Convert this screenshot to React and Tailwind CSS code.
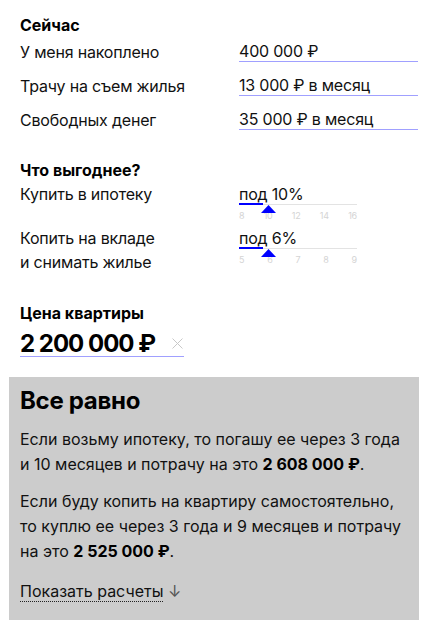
const font = { fontFamily: 'Inter, "Noto Sans", sans-serif' }

function Field({ label, value }) {
  return (
    <div className="grid grid-cols-[219px_179px] items-end">
      <div className="leading-5">{label}</div>
      <div className="leading-5 border-b border-[#a0a0ff]">{value}</div>
    </div>
  )
}

function Slider({ value, ticks }) {
  return (
    <div className="w-[118px] pt-[3px]">
      <div className="leading-[19px]">под {value}%</div>
      <div className="relative h-px bg-[#e3e3e3]">
        <div className="absolute left-0 top-[-1px] h-[2px] w-[24px] bg-[#0000ff]" />
        <svg className="absolute left-[22px] top-[1px]" width="15" height="8" viewBox="0 0 15 8">
          <path d="M7.5 0 L15 8 L0 8 Z" fill="#0000ff" />
        </svg>
      </div>
      <div className="flex justify-between text-[9px] leading-[11px] mt-[5px] text-[#d4d4d4]">
        {ticks.map(t => (
          <span key={t}>{t}</span>
        ))}
      </div>
    </div>
  )
}

export default function App() {
  return (
    <div className="w-[433px] h-[638px] bg-white text-[#111] text-base overflow-hidden" style={font}>
      <div className="px-5 pt-[15px]">
        <h2 className="font-bold leading-5 text-black">Сейчас</h2>
        <div className="mt-[6px] flex flex-col gap-[13px] tracking-[-0.2px]">
          <Field label="У меня накоплено" value="400 000 ₽" />
          <Field label="Трачу на съем жилья" value="13 000 ₽ в месяц" />
          <Field label="Свободных денег" value="35 000 ₽ в месяц" />
        </div>

        <h2 className="mt-[30px] font-bold leading-5 text-black">Что выгоднее?</h2>
        <div className="mt-[2px] grid grid-cols-[219px_1fr] h-[44px] tracking-[-0.2px]">
          <div className="leading-6">Купить в ипотеку</div>
          <Slider value={10} ticks={[8, 10, 12, 14, 16]} />
        </div>
        <div className="grid grid-cols-[219px_1fr] tracking-[-0.2px]">
          <div className="leading-6">
            Копить на вкладе
            <br />и снимать жилье
          </div>
          <Slider value={6} ticks={[5, 6, 7, 8, 9]} />
        </div>

        <h2 className="mt-[29px] font-bold leading-5 text-black">Цена квартиры</h2>
        <div className="mt-[8px] w-[164px] flex items-center justify-between border-b border-[#a0a0ff]">
          <span className="text-2xl font-bold leading-[25px] tracking-[-1px] text-black">2 200 000 ₽</span>
          <svg className="mr-[1px]" width="11" height="11" viewBox="0 0 11 11">
            <path d="M0.5 0.5 L10.5 10.5 M10.5 0.5 L0.5 10.5" stroke="#c8c8c8" strokeWidth="1" />
          </svg>
        </div>
      </div>

      <div className="ml-[9px] w-[410px] mt-[20px] bg-[#cccccc] px-[11px] pt-[10px] h-[243px]">
        <h1 className="text-2xl font-bold leading-7 tracking-[-0.3px] text-black">Все равно</h1>
        <p className="mt-3 leading-[25px]">
          Если возьму ипотеку, то погашу ее через 3 года
          <br />и 10 месяцев и потрачу на это <b className="text-black">2 608 000 ₽</b>.
        </p>
        <p className="mt-3 leading-[25px]">
          Если буду копить на квартиру самостоятельно,
          <br />то куплю ее через 3 года и 9 месяцев и потрачу
          <br />на это <b className="text-black">2 525 000 ₽</b>.
        </p>
        <p className="mt-[15px] leading-[25px]">
          <span className="border-b border-dotted border-[#222]">Показать расчеты</span>{' '}
          <span className="text-[#555]">↓</span>
        </p>
      </div>
    </div>
  )
}
